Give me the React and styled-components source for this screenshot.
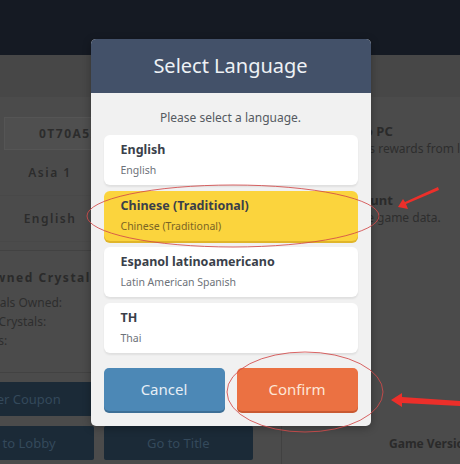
import React from "react";
import styled, { createGlobalStyle } from "styled-components";

const GlobalStyle = createGlobalStyle`
  html, body {
    margin: 0;
    padding: 0;
    background: #4b4b4b;
  }
  body {
    font-family: "Noto Sans", "Open Sans", sans-serif;
  }
`;

const languages = [
  { name: "English", sub: "English" },
  { name: "Chinese (Traditional)", sub: "Chinese (Traditional)", active: true },
  { name: "Espanol latinoamericano", sub: "Latin American Spanish" },
  { name: "TH", sub: "Thai" },
];

export default function App() {
  return (
    <>
      <GlobalStyle />
      <Page>
        <TopBar />
        <Band />
        <Content>
          <LeftCol>
            <IdBox>0T70A5I8K2Q</IdBox>
            <ValueRow>Asia 1</ValueRow>
            <ValueRow>English</ValueRow>
            <Divider />
            <SectionTitle>Owned Crystals</SectionTitle>
            <CrystalList>
              <li>Crystals Owned:</li>
              <li>Paid Crystals:</li>
              <li>Totals:</li>
            </CrystalList>
            <Divider />
            <ButtonRow>
              <DarkButton>Enter Coupon</DarkButton>
              <DarkButton>Transfer Data</DarkButton>
            </ButtonRow>
            <ButtonRow>
              <DarkButton>Go to Lobby</DarkButton>
              <DarkButton>Go to Title</DarkButton>
            </ButtonRow>
          </LeftCol>
          <RightCol>
            <InfoBlock>
              <InfoTitle>Link Data to PC</InfoTitle>
              <InfoText>Receive bonus rewards from linking.</InfoText>
            </InfoBlock>
            <InfoBlock>
              <InfoTitle>Delete Account</InfoTitle>
              <InfoText>Deletes all the game data.</InfoText>
            </InfoBlock>
            <Version>Game Version 2.4.1</Version>
          </RightCol>
        </Content>

        <Overlay>
          <Modal>
            <ModalHeader>Select Language</ModalHeader>
            <ModalBody>
              <Prompt>Please select a language.</Prompt>
              <LangList>
                {languages.map((l) => (
                  <LangItem key={l.name} $active={l.active}>
                    <LangName>{l.name}</LangName>
                    <LangSub $active={l.active}>{l.sub}</LangSub>
                  </LangItem>
                ))}
              </LangList>
              <Actions>
                <ActionButton $tone="cancel">Cancel</ActionButton>
                <ActionButton $tone="confirm">Confirm</ActionButton>
              </Actions>
            </ModalBody>
          </Modal>
        </Overlay>

        <Marks viewBox="0 0 460 464" width="460" height="464">
          <ellipse cx="233" cy="216" rx="146" ry="31" fill="none" stroke="#d24a4a" strokeWidth="1" opacity="0.85" />
          <ellipse cx="305" cy="392" rx="78" ry="40" fill="none" stroke="#d24a4a" strokeWidth="1" opacity="0.85" />
          <polygon points="438,187 439,190 406,204 408,209 398,207 403,199 405,202" fill="#ec2f2a" />
          <polygon points="460,401 460,406 402,403 402,407 391,400 402,393 402,397" fill="#ec2f2a" />
        </Marks>
      </Page>
    </>
  );
}

const Page = styled.div`
  position: relative;
  width: 460px;
  height: 464px;
  overflow: hidden;
  display: flex;
  flex-direction: column;
  background: #4b4b4b;
`;

const TopBar = styled.div`
  height: 55px;
  background: #151a23;
  flex-shrink: 0;
`;

const Band = styled.div`
  height: 42px;
  background: #474747;
  flex-shrink: 0;
`;

const Content = styled.div`
  flex: 1;
  display: flex;
`;

const LeftCol = styled.div`
  width: 338px;
  margin-left: -56px;
  padding: 20px 28px 0 0;
  box-sizing: border-box;
  border-right: 1px solid #414141;
  display: flex;
  flex-direction: column;
  flex-shrink: 0;
`;

const IdBox = styled.div`
  margin-left: 60px;
  height: 31px;
  display: flex;
  align-items: center;
  padding-left: 34px;
  background: #4f4f4f;
  border: 1px solid #555555;
  font-size: 12px;
  font-weight: 700;
  letter-spacing: 1.5px;
  color: #2c2c2c;
`;

const ValueRow = styled.div`
  height: 45px;
  width: 212px;
  display: flex;
  align-items: center;
  justify-content: center;
  border-bottom: 1px solid #484848;
  font-size: 12px;
  font-weight: 600;
  letter-spacing: 1.5px;
  color: #2c2c2c;
`;

const Divider = styled.div`
  height: 1px;
  background: #424242;
  margin: 8px 0 0;
`;

const SectionTitle = styled.div`
  margin: 18px 0 0 40px;
  font-size: 12px;
  font-weight: 700;
  letter-spacing: 1.5px;
  color: #2a2a2a;
`;

const CrystalList = styled.ul`
  list-style: none;
  margin: 7px 0 14px 27px;
  padding: 0;
  font-size: 12px;
  line-height: 19px;
  color: #2e2e2e;
`;

const ButtonRow = styled.div`
  display: flex;
  gap: 10px;
  margin-top: 9px;

  & + & {
    margin-top: 10px;
  }
`;

const DarkButton = styled.div`
  width: 150px;
  height: 34px;
  display: flex;
  align-items: center;
  justify-content: center;
  background: #1b2a37;
  border-radius: 2px;
  font-size: 13px;
  color: #34495b;
`;

const RightCol = styled.div`
  flex: 1;
  padding: 25px 0 0 12px;
  display: flex;
  flex-direction: column;
  white-space: nowrap;
`;

const InfoBlock = styled.div`
  margin-bottom: 34px;
`;

const InfoTitle = styled.div`
  font-size: 13px;
  font-weight: 700;
  color: #2a2a2a;
`;

const InfoText = styled.div`
  font-size: 12px;
  color: #2e2e2e;
`;

const Version = styled.div`
  margin: auto 0 12px 95px;
  font-size: 12px;
  font-weight: 700;
  color: #2a2a2a;
`;

const Overlay = styled.div`
  position: absolute;
  inset: 0;
  display: flex;
  align-items: center;
  justify-content: center;
  padding-left: 1px;
`;

const Modal = styled.div`
  width: 280px;
  border-radius: 5px;
  overflow: hidden;
  background: #f1f1f1;
  box-shadow: 0 2px 8px rgba(0, 0, 0, 0.3);
`;

const ModalHeader = styled.div`
  height: 54px;
  background: #435169;
  display: flex;
  align-items: center;
  justify-content: center;
  font-size: 20px;
  color: #eef1f5;
`;

const ModalBody = styled.div`
  padding: 16px 13px 15px;
`;

const Prompt = styled.div`
  height: 17px;
  line-height: 17px;
  text-align: center;
  font-size: 12px;
  color: #555a61;
  margin-bottom: 9px;
`;

const LangList = styled.div`
  display: flex;
  flex-direction: column;
  gap: 6px;
`;

const LangItem = styled.div`
  height: 50px;
  box-sizing: border-box;
  padding: 5px 0 0 17px;
  border-radius: 6px;
  background: ${(p) => (p.$active ? "#fbd43d" : "#ffffff")};
  box-shadow: ${(p) =>
    p.$active ? "0 2px 0 #e0b52a" : "0 2px 2px rgba(0, 0, 0, 0.07)"};
`;

const LangName = styled.div`
  font-size: 12.5px;
  font-weight: 700;
  line-height: 20px;
  color: #3a3f4a;
`;

const LangSub = styled.div`
  font-size: 10.5px;
  line-height: 16px;
  margin-top: 2px;
  color: ${(p) => (p.$active ? "#7a6524" : "#6d7279")};
`;

const Actions = styled.div`
  display: flex;
  gap: 12px;
  margin-top: 15px;
`;

const ActionButton = styled.div`
  flex: 1;
  height: 43px;
  border-radius: 5px;
  display: flex;
  align-items: center;
  justify-content: center;
  font-size: 15px;
  background: ${(p) => (p.$tone === "confirm" ? "#eb7142" : "#4c88b6")};
  color: ${(p) => (p.$tone === "confirm" ? "#fde6d6" : "#e6eef5")};
  box-shadow: 0 2px 0
    ${(p) => (p.$tone === "confirm" ? "#c95a33" : "#3d6f96")};
`;

const Marks = styled.svg`
  position: absolute;
  left: 0;
  top: 0;
  pointer-events: none;
`;
